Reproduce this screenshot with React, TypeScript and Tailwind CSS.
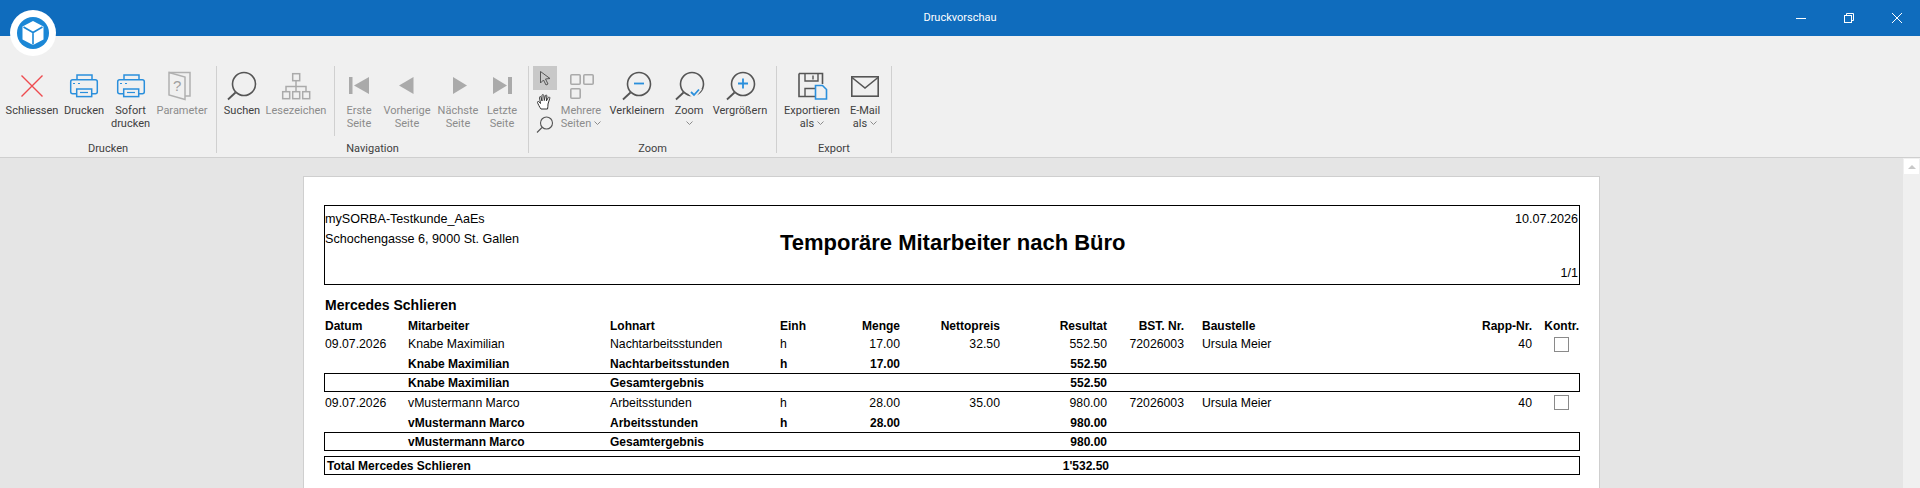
import type { ReactNode } from "react";

const grid =
  "grid grid-cols-[83px_202px_170px_60px_60px_100px_107px_77px_256px_92px_47px] items-center h-[19px]";

const aligns = ["", "", "", "", "text-right", "text-right", "text-right", "text-right", "pl-[18px]", "text-right", "text-right"];

function Logo() {
  return (
    <svg className="absolute left-[10px] top-[10px]" width="46" height="46" viewBox="0 0 46 46">
      <circle cx="23" cy="23" r="23" fill="#fff" />
      <circle cx="23" cy="23" r="16" fill="#1b87d6" />
      <path d="M23 11 L33.5 16.5 V29.5 L23 35 L12.5 29.5 V16.5 Z" fill="#fff" />
      <path d="M13.5 17 L23 22.5 L32.5 17 M23 22.5 V34.5" fill="none" stroke="#1b87d6" strokeWidth="1.6" />
    </svg>
  );
}

function Btn({
  w,
  lines,
  icon,
  off,
  chevron,
}: {
  w: string;
  lines: string[];
  icon: ReactNode;
  off?: boolean;
  chevron?: boolean;
}) {
  return (
    <div className={`${w} flex flex-col items-center shrink-0 ${off ? "text-[#8c8c8c]" : "text-[#404040]"}`}>
      <div className="h-[38px]">{icon}</div>
      {lines.map((line, i) => (
        <div key={line} className="h-[13px] leading-[13px] whitespace-nowrap flex items-center gap-[3px]">
          {line}
          {chevron && lines.length > 1 && i === lines.length - 1 && <Chevron />}
        </div>
      ))}
      {chevron && lines.length === 1 && (
        <div className="h-[13px] flex items-center">
          <Chevron />
        </div>
      )}
    </div>
  );
}

function Chevron() {
  return (
    <svg width="7" height="5" viewBox="0 0 7 5">
      <path d="M0.5 0.5 L3.5 3.5 L6.5 0.5" fill="none" stroke="#8c8c8c" strokeWidth="1" />
    </svg>
  );
}

function Icon({ children }: { children: ReactNode }) {
  return (
    <svg width="36" height="36" viewBox="0 0 36 36" fill="none">
      {children}
    </svg>
  );
}

function Printer() {
  return (
    <Icon>
      <path d="M11 13.5V9H26V13.5" stroke="#2a8fdc" strokeWidth="1.5" />
      <rect x="4.7" y="13.7" width="26.6" height="14" rx="2" stroke="#2a8fdc" strokeWidth="1.5" />
      <rect x="10.7" y="23" width="15" height="7.6" fill="#f0f0f0" stroke="#2a8fdc" strokeWidth="1.5" />
      <path d="M7 17.5H9M12 17.5H14" stroke="#2a8fdc" strokeWidth="1.2" />
      <path d="M14 26.5H22" stroke="#2a8fdc" strokeWidth="1.2" />
    </Icon>
  );
}

function Loupe({ cx, children }: { cx: number; children?: ReactNode }) {
  return (
    <Icon>
      <circle cx={cx} cy="18" r="11.5" stroke="#555" strokeWidth="1.6" />
      <path d={`M${cx - 8.5} 26.5 L${cx - 16} 33.5`} stroke="#555" strokeWidth="1.8" />
      {children}
    </Icon>
  );
}

function Sep({ short }: { short?: boolean }) {
  return <div className={`w-px shrink-0 bg-[#d0d0d0] ${short ? "h-[70px]" : "h-[87px]"}`} />;
}

function Group({ w, label, pad, children }: { w: string; label: string; pad: string; children: ReactNode }) {
  return (
    <div className={`${w} flex flex-col shrink-0`}>
      <div className={`h-[76px] flex items-start ${pad}`}>{children}</div>
      <div className="text-center leading-[14px] text-[#404040]">{label}</div>
    </div>
  );
}

function Ribbon() {
  return (
    <div className="h-[122px] pt-[30px] bg-[#f0f0f0] border-b border-[#cfcfcf] flex font-['Roboto',sans-serif] text-[11px]">
      <Group w="w-[216px]" label="Drucken" pad="pl-[6px]">
        <Btn
          w="w-[52px]"
          lines={["Schliessen"]}
          icon={
            <Icon>
              <path d="M7.5 9.5 L28.5 30.5 M28.5 9.5 L7.5 30.5" stroke="#ee4b4f" strokeWidth="1.4" />
            </Icon>
          }
        />
        <Btn w="w-[52px]" lines={["Drucken"]} icon={<Printer />} />
        <Btn w="w-[41px]" lines={["Sofort", "drucken"]} icon={<Printer />} />
        <Btn
          w="w-[62px]"
          off
          lines={["Parameter"]}
          icon={
            <Icon>
              <path d="M5 6.5H26V30H21" stroke="#b0b0b0" strokeWidth="1.5" />
              <path d="M5 6.5 L21 11 V33.5 L5 29 Z" stroke="#b0b0b0" strokeWidth="1.5" />
              <text x="9" y="25" fontSize="15" fill="#a0a0a0" fontFamily="Liberation Sans">?</text>
            </Icon>
          }
        />
      </Group>
      <Sep />
      <Group w="w-[311px]" label="Navigation" pad="pl-[3px]">
        <Btn w="w-[44px]" lines={["Suchen"]} icon={<Loupe cx={20} />} />
        <Btn
          w="w-[64px]"
          off
          lines={["Lesezeichen"]}
          icon={
            <Icon>
              <g stroke="#aaa" strokeWidth="1.5">
                <rect x="14.7" y="7.7" width="7" height="7" />
                <rect x="4.7" y="25.7" width="7" height="7" />
                <rect x="14.7" y="25.7" width="7" height="7" />
                <rect x="24.7" y="25.7" width="7" height="7" />
                <path d="M18 15V25M8 25V20.5H28V25" />
              </g>
            </Icon>
          }
        />
        <div className="ml-[6px] mr-[3px]">
          <Sep short />
        </div>
        <Btn
          w="w-[42px]"
          off
          lines={["Erste", "Seite"]}
          icon={
            <Icon>
              <path d="M8 11H11.5V28H8ZM13 19.5L28 11V28Z" fill="#aaa" />
            </Icon>
          }
        />
        <Btn
          w="w-[54px]"
          off
          lines={["Vorherige", "Seite"]}
          icon={
            <Icon>
              <path d="M10 19.5L24.5 11V28Z" fill="#aaa" />
            </Icon>
          }
        />
        <Btn
          w="w-[48px]"
          off
          lines={["Nächste", "Seite"]}
          icon={
            <Icon>
              <path d="M13 11L27 19.5L13 28Z" fill="#aaa" />
            </Icon>
          }
        />
        <Btn
          w="w-[40px]"
          off
          lines={["Letzte", "Seite"]}
          icon={
            <Icon>
              <path d="M9 11L23 19.5L9 28ZM24 11H28V28H24Z" fill="#aaa" />
            </Icon>
          }
        />
      </Group>
      <Sep />
      <Group w="w-[247px]" label="Zoom" pad="pl-[4px]">
        <div className="w-[24px] shrink-0 flex flex-col items-center">
          <div className="w-[24px] h-[24px] bg-[#c8c8c8] flex items-center justify-center">
            <svg width="14" height="16" viewBox="0 0 14 16" fill="none">
              <path d="M2.5 1.5 L12 8.5 L7.5 9 L10 14 L8 15 L5.5 10 L2.5 13 Z" stroke="#555" strokeWidth="1" />
            </svg>
          </div>
          <svg className="mt-[3px]" width="18" height="18" viewBox="0 0 18 18" fill="#fff" stroke="#333" strokeWidth="1">
            <path d="M5 16 C3.5 14 2 11 1.5 9.5 C1.2 8.5 2.5 8 3.2 9 L4.5 10.5 L3.5 4.5 C3.4 3.5 4.8 3.2 5 4.2 L6 8 L6 2.5 C6 1.3 7.7 1.3 7.8 2.5 L8.3 7.5 L9.3 2.8 C9.6 1.7 11 2 10.9 3 L10.4 8 L12.3 4.5 C12.8 3.6 14.1 4.1 13.8 5.2 L12 11 C11.8 13 12 14.5 11.5 16 Z" />
          </svg>
          <svg className="mt-[5px]" width="18" height="18" viewBox="0 0 18 18" fill="none" stroke="#555" strokeWidth="1.1">
            <circle cx="10.5" cy="7" r="6" />
            <path d="M6 11.5 L1 16.5" />
          </svg>
        </div>
        <Btn
          w="w-[48px]"
          off
          chevron
          lines={["Mehrere", "Seiten"]}
          icon={
            <Icon>
              <g stroke="#aaa" strokeWidth="1.6">
                <rect x="7.8" y="8.8" width="9.4" height="9.4" rx="1" />
                <rect x="20.8" y="8.8" width="9.4" height="9.4" rx="1" />
                <rect x="7.8" y="22.8" width="9.4" height="9.4" rx="1" />
              </g>
            </Icon>
          }
        />
        <Btn
          w="w-[64px]"
          lines={["Verkleinern"]}
          icon={
            <Loupe cx={20}>
              <path d="M15 17.5H25" stroke="#2a8fdc" strokeWidth="1.8" />
            </Loupe>
          }
        />
        <Btn
          w="w-[40px]"
          chevron
          lines={["Zoom"]}
          icon={
            <Loupe cx={21}>
              <path d="M19 26L23 29.5L29 22" stroke="#f0f0f0" strokeWidth="5" />
              <path d="M20 26L23 29L28 23.5" stroke="#2a8fdc" strokeWidth="1.8" />
            </Loupe>
          }
        />
        <Btn
          w="w-[62px]"
          lines={["Vergrößern"]}
          icon={
            <Loupe cx={21}>
              <path d="M16 17.5H26M21 12.5V22.5" stroke="#2a8fdc" strokeWidth="1.8" />
            </Loupe>
          }
        />
      </Group>
      <Sep />
      <Group w="w-[114px]" label="Export" pad="pl-[3px]">
        <Btn
          w="w-[64px]"
          chevron
          lines={["Exportieren", "als"]}
          icon={
            <Icon>
              <path d="M5 7.5H28.5V18 M22 30.5H5V7.5" stroke="#555" strokeWidth="1.6" />
              <path d="M11 8V15H24V8 M19 9.5V13.5 M11 30V22.5H21" stroke="#555" strokeWidth="1.4" />
              <path d="M21.5 19.5H28.5L32.5 23.5V33H21.5Z" fill="#f0f0f0" stroke="#2a8fdc" strokeWidth="1.6" />
            </Icon>
          }
        />
        <Btn
          w="w-[42px]"
          chevron
          lines={["E-Mail", "als"]}
          icon={
            <Icon>
              <rect x="4.8" y="10.8" width="26.4" height="19.4" stroke="#555" strokeWidth="1.6" />
              <path d="M5 11.5L18 22L31 11.5" stroke="#555" strokeWidth="1.6" />
            </Icon>
          }
        />
      </Group>
      <Sep />
    </div>
  );
}

function Row({
  cells,
  box,
  bold,
  check,
  className = "",
}: {
  cells: string[];
  box?: boolean;
  bold?: boolean;
  check?: string;
  className?: string;
}) {
  return (
    <div
      className={`${grid} ${box ? "border border-black" : "px-px"} ${bold ? "font-bold text-[12px]" : "text-[12.25px]"} ${className}`}
    >
      {cells.map((c, i) => (
        <div key={i} className={`whitespace-nowrap ${aligns[i]}`}>
          {c}
        </div>
      ))}
      {check && <div className={`col-start-11 row-start-1 ml-[22px] w-[15px] h-[15px] border border-[#8a8a8a] ${check}`} />}
    </div>
  );
}

function Report() {
  return (
    <div className="ml-[303px] w-[1297px] h-[312px] mt-[18px] bg-white border border-[#cfcfcf] border-b-0 pt-[28px] pl-[20px] font-['Liberation_Sans',sans-serif] text-black">
      <div className="w-[1256px] h-[80px] border border-black flex items-start pt-[3px] pb-[1px] pr-px text-[12.6px]">
        <div className="w-[455px] shrink-0 leading-[20px]">
          <div>mySORBA-Testkunde_AaEs</div>
          <div>Schochengasse 6, 9000 St. Gallen</div>
        </div>
        <div className="text-[22px] font-bold leading-[24px] mt-[22px]">Temporäre Mitarbeiter nach Büro</div>
        <div className="ml-auto h-full flex flex-col justify-between items-end text-right leading-[20px]">
          <div>10.07.2026</div>
          <div>1/1</div>
        </div>
      </div>
      <div className="w-[1256px] mt-[10px]">
        <div className="h-[21px] pl-px font-bold text-[14px] leading-[21px]">Mercedes Schlieren</div>
        <Row
          bold
          cells={["Datum", "Mitarbeiter", "Lohnart", "Einh", "Menge", "Nettopreis", "Resultat", "BST. Nr.", "Baustelle", "Rapp-Nr.", "Kontr."]}
        />
        <Row
          check="mt-0"
          cells={["09.07.2026", "Knabe Maximilian", "Nachtarbeitsstunden", "h", "17.00", "32.50", "552.50", "72026003", "Ursula Meier", "40"]}
        />
        <Row bold cells={["", "Knabe Maximilian", "Nachtarbeitsstunden", "h", "17.00", "", "552.50"]} />
        <Row box bold cells={["", "Knabe Maximilian", "Gesamtergebnis", "", "", "", "552.50"]} />
        <Row
          className="mt-[2px]"
          check="mb-[2px]"
          cells={["09.07.2026", "vMustermann Marco", "Arbeitsstunden", "h", "28.00", "35.00", "980.00", "72026003", "Ursula Meier", "40"]}
        />
        <Row bold cells={["", "vMustermann Marco", "Arbeitsstunden", "h", "28.00", "", "980.00"]} />
        <Row box bold cells={["", "vMustermann Marco", "Gesamtergebnis", "", "", "", "980.00"]} />
        <div className="h-[5px]" />
        <Row box bold className="pl-[2px]" cells={["Total Mercedes Schlieren", "", "", "", "", "", "1'532.50"]} />
      </div>
    </div>
  );
}

export default function App() {
  return (
    <div className="relative w-[1920px] h-[488px] overflow-hidden bg-[#e5e5e5]">
      <div className="h-[36px] bg-[#0f6cbd] flex items-center justify-center relative">
        <span className="text-white text-[11px] font-['Roboto',sans-serif]">Druckvorschau</span>
        <div className="absolute right-0 top-0 h-[36px] flex items-center pr-[18px] gap-[38px]">
          <svg width="10" height="10" viewBox="0 0 10 10"><path d="M0 5.5H10" stroke="#fff" /></svg>
          <svg width="10" height="10" viewBox="0 0 10 10" fill="none" stroke="#fff">
            <rect x="0.5" y="2.5" width="7" height="7" />
            <path d="M2.5 2.5V0.5H9.5V7.5H7.5" />
          </svg>
          <svg width="10" height="10" viewBox="0 0 10 10"><path d="M0 0L10 10M10 0L0 10" stroke="#fff" /></svg>
        </div>
      </div>
      <Ribbon />
      <div className="flex">
        <div className="flex-1">
          <Report />
        </div>
        <div className="w-[17px] h-[330px] bg-[#f0f0f0] pt-[1px] pl-[1px]">
          <div className="w-[15px] h-[15px] bg-white flex items-center justify-center">
            <div className="w-0 h-0 border-l-[4px] border-r-[4px] border-b-[4px] border-l-transparent border-r-transparent border-b-[#c8c8c8]" />
          </div>
        </div>
      </div>
      <Logo />
    </div>
  );
}
